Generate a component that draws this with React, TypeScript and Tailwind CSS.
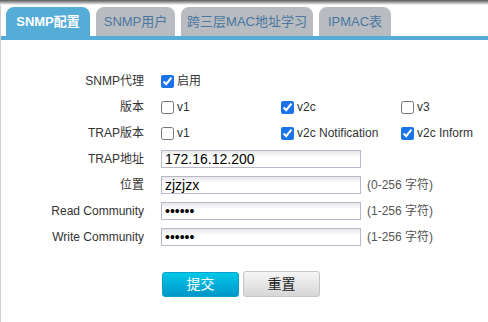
import React from 'react';

const tabs = [
  { name: 'SNMP配置', w: 'w-[84px]', active: true },
  { name: 'SNMP用户', w: 'w-[79px]', active: false },
  { name: '跨三层MAC地址学习', w: 'w-[132px]', active: false },
  { name: 'IPMAC表', w: 'w-[72px]', active: false },
];

function Check({ checked, label }: { checked: boolean; label: string }) {
  return (
    <label className="flex items-center w-[120px]">
      <input type="checkbox" defaultChecked={checked} className="w-[13px] h-[13px] m-0 accent-[#1a73e8]" />
      <span className="ml-[3px] text-[#333]">{label}</span>
    </label>
  );
}

function Field({ value, type = 'text', hint }: { value: string; type?: string; hint?: string }) {
  return (
    <div className="flex items-center">
      <input
        type={type}
        defaultValue={value}
        className="w-[200px] h-[18px] border border-[#b8b8c8] bg-gradient-to-b from-[#e8e8ec] to-white to-[40%] px-[3px] text-[14px] text-black outline-none"
      />
      {hint && <span className="ml-[6px] text-[#555]">{hint}</span>}
    </div>
  );
}

export default function App() {
  return (
    <div className="w-[488px] h-[322px] bg-white text-[12px] font-['Liberation_Sans','Noto_Sans_CJK_SC',sans-serif] overflow-hidden">
      {/* top shadow band */}
      <div className="h-[5px] bg-gradient-to-b from-[#5a5a5a] to-white" />
      <div className="border-l border-[#cfcfcf] h-[317px]">
        {/* Tabs */}
        <div className="flex gap-[6px] pl-[5px] pt-[2px]">
          {tabs.map((t) => (
            <div
              key={t.name}
              className={`${t.w} h-[29px] rounded-t-[8px] flex items-center justify-center text-[13px] ${
                t.active ? 'bg-[#55acd6] text-white font-bold' : 'bg-[#b8bcc0] text-[#4a76a0]'
              }`}
            >
              {t.name}
            </div>
          ))}
        </div>
        <div className="h-[4px] bg-[#55acd6]" />

        {/* Form */}
        <div className="pt-[28px] grid grid-cols-[143px_1fr] gap-x-[17px] auto-rows-[26px] items-center text-[#333]">
          <div className="text-right">SNMP代理</div>
          <div className="flex"><Check checked label="启用" /></div>

          <div className="text-right">版本</div>
          <div className="flex">
            <Check checked={false} label="v1" />
            <Check checked label="v2c" />
            <Check checked={false} label="v3" />
          </div>

          <div className="text-right">TRAP版本</div>
          <div className="flex">
            <Check checked={false} label="v1" />
            <Check checked label="v2c Notification" />
            <Check checked label="v2c Inform" />
          </div>

          <div className="text-right">TRAP地址</div>
          <Field value="172.16.12.200" />

          <div className="text-right">位置</div>
          <Field value="zjzjzx" hint="(0-256 字符)" />

          <div className="text-right">Read Community</div>
          <Field value="public" type="password" hint="(1-256 字符)" />

          <div className="text-right">Write Community</div>
          <Field value="privat" type="password" hint="(1-256 字符)" />
        </div>

        {/* Buttons */}
        <div className="flex gap-[4px] pl-[161px] mt-[22px]">
          <button className="w-[77px] h-[25px] rounded-[3px] border border-[#0aa0cc] bg-gradient-to-b from-[#00c9e8] to-[#0096c8] text-white text-[14px]">
            提交
          </button>
          <button className="w-[77px] h-[26px] -mt-[1px] rounded-[3px] border border-[#c4c4c4] bg-gradient-to-b from-[#f6f6f6] to-[#d6d6d6] text-[#222] text-[14px]">
            重置
          </button>
        </div>
      </div>
    </div>
  );
}
